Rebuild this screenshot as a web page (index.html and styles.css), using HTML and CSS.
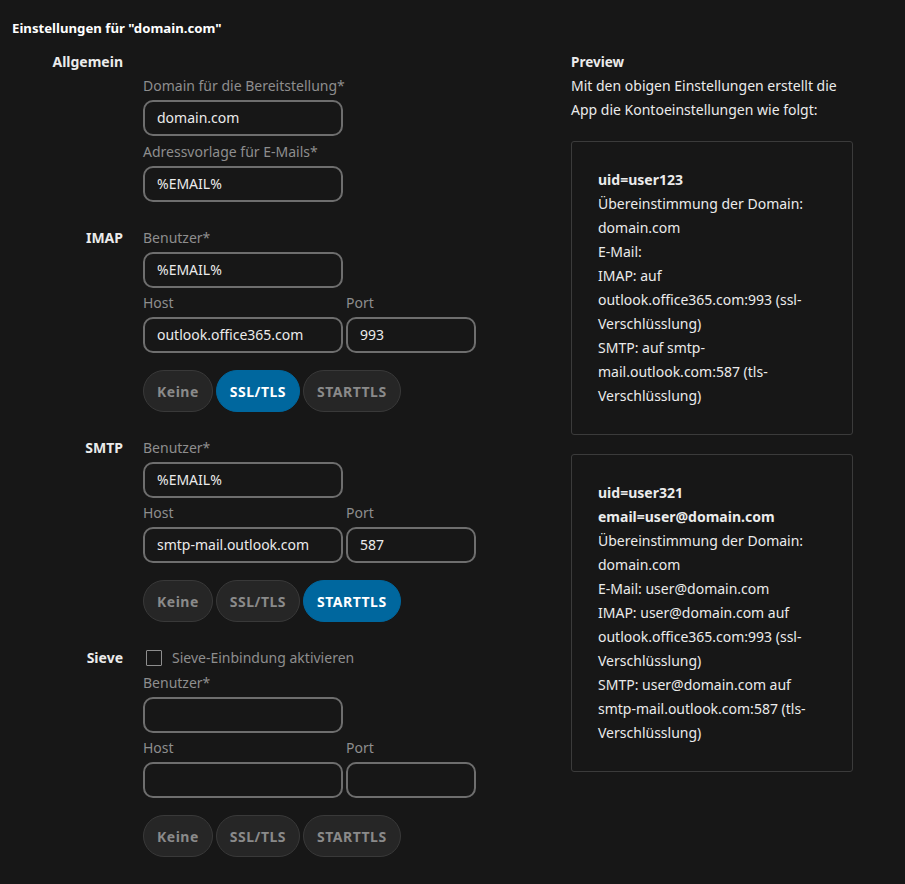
FILE: index.html
```html
<!DOCTYPE html>
<html lang="de">
<head>
<meta charset="utf-8">
<title>Einstellungen</title>
<link rel="stylesheet" href="styles.css">
</head>
<body>
<div class="page">
  <h2 class="title">Einstellungen für "domain.com"</h2>
  <div class="cols">
    <div class="form">
      <div class="section general">
        <div class="sec-label">Allgemein</div>
        <div class="fields">
          <label class="flabel">Domain für die Bereitstellung*</label>
          <div class="input wide">domain.com</div>
          <label class="flabel">Adressvorlage für E-Mails*</label>
          <div class="input wide">%EMAIL%</div>
        </div>
      </div>

      <div class="section">
        <div class="sec-label">IMAP</div>
        <div class="fields">
          <label class="flabel">Benutzer*</label>
          <div class="input wide">%EMAIL%</div>
          <div class="hostport">
            <div class="hp-col"><label class="flabel">Host</label><div class="input wide">outlook.office365.com</div></div>
            <div class="hp-col"><label class="flabel">Port</label><div class="input port">993</div></div>
          </div>
          <div class="btns">
            <button class="btn">Keine</button>
            <button class="btn active">SSL/TLS</button>
            <button class="btn">STARTTLS</button>
          </div>
        </div>
      </div>

      <div class="section">
        <div class="sec-label">SMTP</div>
        <div class="fields">
          <label class="flabel">Benutzer*</label>
          <div class="input wide">%EMAIL%</div>
          <div class="hostport">
            <div class="hp-col"><label class="flabel">Host</label><div class="input wide">smtp-mail.outlook.com</div></div>
            <div class="hp-col"><label class="flabel">Port</label><div class="input port">587</div></div>
          </div>
          <div class="btns">
            <button class="btn">Keine</button>
            <button class="btn">SSL/TLS</button>
            <button class="btn active">STARTTLS</button>
          </div>
        </div>
      </div>

      <div class="section">
        <div class="sec-label">Sieve</div>
        <div class="fields">
          <div class="check"><span class="box"></span><span class="check-text">Sieve-Einbindung aktivieren</span></div>
          <label class="flabel">Benutzer*</label>
          <div class="input wide"></div>
          <div class="hostport">
            <div class="hp-col"><label class="flabel">Host</label><div class="input wide"></div></div>
            <div class="hp-col"><label class="flabel">Port</label><div class="input port"></div></div>
          </div>
          <div class="btns">
            <button class="btn">Keine</button>
            <button class="btn">SSL/TLS</button>
            <button class="btn">STARTTLS</button>
          </div>
        </div>
      </div>
    </div>

    <div class="preview">
      <div class="pv-title">Preview</div>
      <p class="pv-desc">Mit den obigen Einstellungen erstellt die App die Kontoeinstellungen wie folgt:</p>
      <div class="pv-box">
        <div class="b">uid=user123</div>
        <div>Übereinstimmung der Domain: domain.com</div>
        <div>E-Mail:</div>
        <div>IMAP: auf outlook.office365.com:993 (ssl-Verschlüsslung)</div>
        <div>SMTP: auf smtp-mail.outlook.com:587 (tls-Verschlüsslung)</div>
      </div>
      <div class="pv-box">
        <div class="b">uid=user321</div>
        <div class="b">email=user@domain.com</div>
        <div>Übereinstimmung der Domain: domain.com</div>
        <div>E-Mail: user@domain.com</div>
        <div>IMAP: user@domain.com auf outlook.office365.com:993 (ssl-Verschlüsslung)</div>
        <div>SMTP: user@domain.com auf smtp-mail.outlook.com:587 (tls-Verschlüsslung)</div>
      </div>
    </div>
  </div>
</div>
</body>
</html>
```

FILE: styles.css
```css
* { box-sizing: border-box; }
html, body {
  margin: 0;
  background: #171717;
  color: #ebebeb;
  font-family: "Noto Sans", "Open Sans", sans-serif;
  font-size: 14px;
}
.page {
  padding: 16px 12px 0 12px;
  height: 884px;
  overflow: hidden;
}
.title {
  margin: 0;
  font-size: 13.2px;
  font-weight: 700;
  line-height: 24px;
  color: #ffffff;
}
.cols {
  display: flex;
  gap: 95px;
  margin-top: 12px;
}
.form {
  width: 464px;
  display: flex;
  flex-direction: column;
  gap: 26px;
}
.section {
  display: grid;
  grid-template-columns: 111px 1fr;
  column-gap: 20px;
}
.sec-label {
  text-align: right;
  font-weight: 700;
  font-size: 14px;
  line-height: 20px;
  color: #ebebeb;
}
.general .fields { padding-top: 24px; }
.fields {
  display: flex;
  flex-direction: column;
}
.flabel {
  display: block;
  color: #8e8e8e;
  font-size: 14px;
  line-height: 20px;
  margin-bottom: 4px;
}
.input + .flabel { margin-top: 6px; }
.input {
  height: 36px;
  border: 2px solid #6e6e6e;
  border-radius: 10px;
  padding: 0 12px;
  line-height: 32px;
  color: #ebebeb;
  font-size: 14px;
  white-space: nowrap;
  overflow: hidden;
}
.input.wide { width: 200px; }
.input.port { width: 130px; }
.hostport {
  display: flex;
  gap: 3px;
  margin-top: 5px;
}
.btns {
  display: flex;
  gap: 3px;
  margin-top: 17px;
}
.btn {
  height: 42px;
  padding: 0 13px;
  border-radius: 21px;
  border: 1px solid #393939;
  background: #262626;
  color: #8a8a8a;
  font-family: inherit;
  font-size: 14px;
  font-weight: 700;
  letter-spacing: 0.5px;
}
.btn.active {
  background: #00679e;
  border-color: #00679e;
  color: #ffffff;
}
.check {
  display: flex;
  align-items: center;
  gap: 10px;
  height: 20px;
  margin-bottom: 5px;
}
.box {
  width: 16px;
  height: 16px;
  border: 1px solid #8e8e8e;
  margin-left: 3px;
  border-radius: 1px;
}
.check-text {
  color: #8e8e8e;
  line-height: 20px;
}
.preview {
  width: 282px;
}
.pv-title {
  font-weight: 700;
  font-size: 13.5px;
  line-height: 20px;
  color: #ebebeb;
}
.pv-desc {
  margin: 2px 0 19px 0;
  line-height: 24px;
}
.pv-box {
  border: 1px solid #3b3b3b;
  border-radius: 3px;
  padding: 26px 26px;
  line-height: 24px;
  margin-bottom: 19px;
}
.b { font-weight: 700; }
```
